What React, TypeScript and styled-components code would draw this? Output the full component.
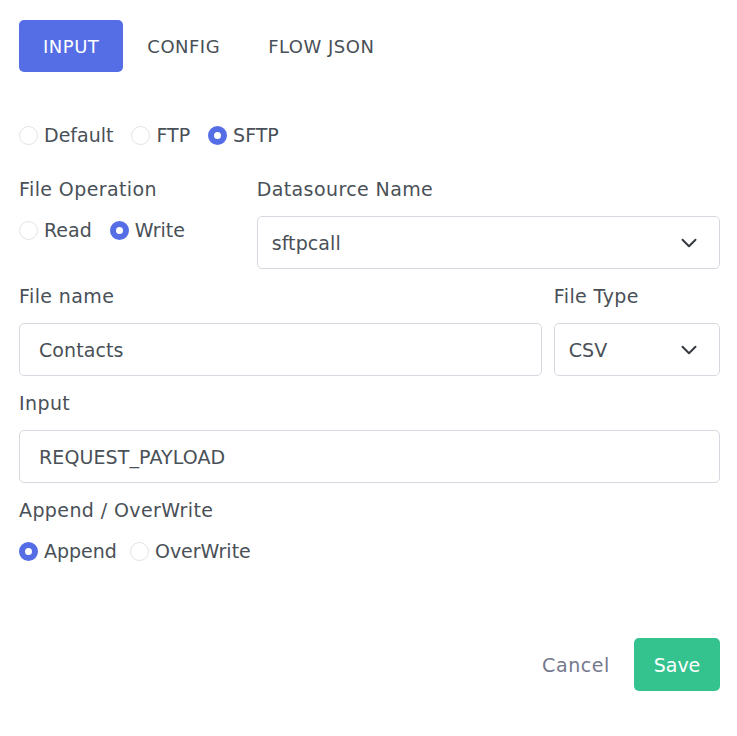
import React from "react";
import styled, { createGlobalStyle } from "styled-components";

const GlobalStyle = createGlobalStyle`
  body {
    margin: 0;
    background: #ffffff;
    font-family: "DejaVu Sans", "Open Sans", sans-serif;
    color: #495057;
  }
`;

const Page = styled.div`
  padding: 20px 17px 40px 19px;
  width: 737px;
  box-sizing: border-box;
`;

const Tabs = styled.div`
  display: flex;
  margin-bottom: 49px;
`;

const Tab = styled.button<{ $active?: boolean }>`
  height: 52px;
  padding: 0 24px;
  border: none;
  border-radius: 5px;
  font-family: inherit;
  font-size: 18px;
  letter-spacing: 0.5px;
  background: ${({ $active }) => ($active ? "#556ee6" : "transparent")};
  color: ${({ $active }) => ($active ? "#ffffff" : "#495057")};
  cursor: pointer;
`;

const RadioGroup = styled.div<{ $gap?: number }>`
  display: flex;
  align-items: center;
  height: 28px;
  gap: ${({ $gap }) => $gap ?? 17}px;
`;

const RadioOption = styled.label`
  display: flex;
  align-items: center;
  gap: 6px;
  font-size: 19px;
  cursor: pointer;
`;

const RadioCircle = styled.span<{ $checked?: boolean }>`
  width: 19px;
  height: 19px;
  box-sizing: border-box;
  border-radius: 50%;
  border: ${({ $checked }) =>
    $checked ? "6px solid #556ee6" : "1px solid #e1e4e8"};
  background: #ffffff;
`;

const Row = styled.div`
  display: grid;
  grid-template-columns: repeat(12, 1fr);
  column-gap: 12px;
  margin-top: 28px;
  & + & {
    margin-top: 15px;
  }
`;

const Field = styled.div<{ $span: number }>`
  grid-column: span ${({ $span }) => $span};
  display: flex;
  flex-direction: column;
`;

const Label = styled.div`
  font-size: 19px;
  letter-spacing: 0.4px;
  line-height: 24px;
  margin-bottom: 15px;
`;

const Box = styled.div<{ $select?: boolean }>`
  height: 53px;
  box-sizing: border-box;
  border: 1px solid #d6dae0;
  border-radius: 5px;
  display: flex;
  align-items: center;
  justify-content: space-between;
  padding: ${({ $select }) => ($select ? "0 22px 0 14px" : "0 19px")};
  font-size: 19px;
  letter-spacing: 0.1px;
  color: #495057;
`;

const Chevron = styled.svg`
  width: 16px;
  height: 10px;
  flex-shrink: 0;
`;

const Footer = styled.div`
  display: flex;
  justify-content: flex-end;
  align-items: center;
  gap: 18px;
  margin-top: 73px;
`;

const TextButton = styled.button`
  border: none;
  background: transparent;
  font-family: inherit;
  font-size: 19px;
  letter-spacing: 0.6px;
  color: #74788d;
  cursor: pointer;
`;

const SaveButton = styled.button`
  height: 53px;
  width: 86px;
  border: none;
  border-radius: 5px;
  background: #34c38f;
  color: #ffffff;
  font-family: inherit;
  font-size: 19px;
  cursor: pointer;
`;

type Opt = { label: string; checked?: boolean };

const Radios = ({ options, gap }: { options: Opt[]; gap?: number }) => (
  <RadioGroup $gap={gap}>
    {options.map((o) => (
      <RadioOption key={o.label}>
        <RadioCircle $checked={o.checked} />
        {o.label}
      </RadioOption>
    ))}
  </RadioGroup>
);

const ChevronDown = () => (
  <Chevron viewBox="0 0 16 10" fill="none">
    <path
      d="M1.5 1.8 L8 8.2 L14.5 1.8"
      stroke="#343a40"
      strokeWidth="2"
      strokeLinecap="round"
      strokeLinejoin="round"
    />
  </Chevron>
);

const App = () => {
  return (
    <Page>
      <GlobalStyle />
      <Tabs>
        <Tab $active>INPUT</Tab>
        <Tab>CONFIG</Tab>
        <Tab>FLOW JSON</Tab>
      </Tabs>

      <Radios
        gap={18}
        options={[{ label: "Default" }, { label: "FTP" }, { label: "SFTP", checked: true }]}
      />

      <Row>
        <Field $span={4}>
          <Label>File Operation</Label>
          <Radios gap={18} options={[{ label: "Read" }, { label: "Write", checked: true }]} />
        </Field>
        <Field $span={8}>
          <Label>Datasource Name</Label>
          <Box $select>
            sftpcall
            <ChevronDown />
          </Box>
        </Field>
      </Row>

      <Row>
        <Field $span={9}>
          <Label>File name</Label>
          <Box>Contacts</Box>
        </Field>
        <Field $span={3}>
          <Label>File Type</Label>
          <Box $select>
            CSV
            <ChevronDown />
          </Box>
        </Field>
      </Row>

      <Row>
        <Field $span={12}>
          <Label>Input</Label>
          <Box>REQUEST_PAYLOAD</Box>
        </Field>
      </Row>

      <Row>
        <Field $span={12}>
          <Label>Append / OverWrite</Label>
          <Radios
            gap={13}
            options={[{ label: "Append", checked: true }, { label: "OverWrite" }]}
          />
        </Field>
      </Row>

      <Footer>
        <TextButton>Cancel</TextButton>
        <SaveButton>Save</SaveButton>
      </Footer>
    </Page>
  );
};

export default App;
